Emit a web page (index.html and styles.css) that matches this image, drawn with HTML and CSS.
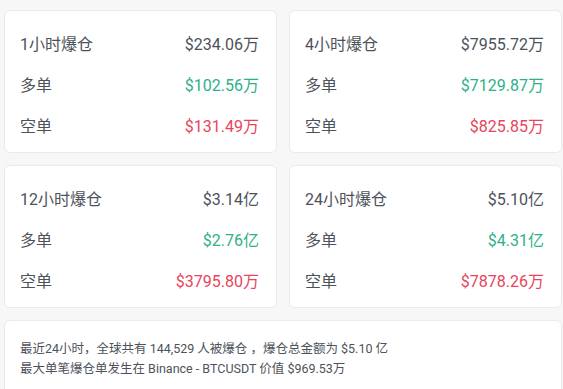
FILE: index.html
```html
<!DOCTYPE html>
<html lang="zh-CN">
<head>
<meta charset="utf-8">
<link rel="stylesheet" href="styles.css">
</head>
<body>
<div class="page">
  <div class="grid">
    <div class="card">
      <div class="row"><span class="label">1小时爆仓</span><span class="val">$234.06万</span></div>
      <div class="row"><span class="label">多单</span><span class="val up">$102.56万</span></div>
      <div class="row"><span class="label">空单</span><span class="val down">$131.49万</span></div>
    </div>
    <div class="card">
      <div class="row"><span class="label">4小时爆仓</span><span class="val">$7955.72万</span></div>
      <div class="row"><span class="label">多单</span><span class="val up">$7129.87万</span></div>
      <div class="row"><span class="label">空单</span><span class="val down">$825.85万</span></div>
    </div>
    <div class="card">
      <div class="row"><span class="label">12小时爆仓</span><span class="val">$3.14亿</span></div>
      <div class="row"><span class="label">多单</span><span class="val up">$2.76亿</span></div>
      <div class="row"><span class="label">空单</span><span class="val down">$3795.80万</span></div>
    </div>
    <div class="card">
      <div class="row"><span class="label">24小时爆仓</span><span class="val">$5.10亿</span></div>
      <div class="row"><span class="label">多单</span><span class="val up">$4.31亿</span></div>
      <div class="row"><span class="label">空单</span><span class="val down">$7878.26万</span></div>
    </div>
  </div>
  <div class="summary">
    <p>最近24小时，全球共有 144,529 人被爆仓 ，爆仓总金额为 $5.10 亿</p>
    <p>最大单笔爆仓单发生在 Binance - BTCUSDT 价值 $969.53万</p>
  </div>
</div>
</body>
</html>
```
FILE: styles.css
```css
html, body {
  margin: 0;
  padding: 0;
  background: #f7f7f7;
}
body {
  font-family: Roboto, "Noto Sans CJK SC", sans-serif;
  color: #4d525a;
}
.page {
  padding: 10px 1px 0 4px;
}
.grid {
  display: grid;
  grid-template-columns: 273px 273px;
  column-gap: 12px;
  row-gap: 12px;
}
.card {
  background: #fff;
  border: 1px solid #e9eaec;
  border-radius: 6px;
  box-sizing: border-box;
  height: 143px;
  padding: 11px 17px 0 15px;
  display: flex;
  flex-direction: column;
}
.row {
  display: flex;
  justify-content: space-between;
  align-items: center;
  height: 41px;
  font-size: 16px;
}
.val.up { color: #2fb08a; }
.val.down { color: #e8455c; }
.summary {
  margin-top: 12px;
  background: #fff;
  border: 1px solid #e9eaec;
  border-radius: 6px;
  height: 90px;
  box-sizing: border-box;
  padding: 18px 15px;
  font-size: 12.5px;
  line-height: 20px;
}
.summary p { margin: 0; }
```
